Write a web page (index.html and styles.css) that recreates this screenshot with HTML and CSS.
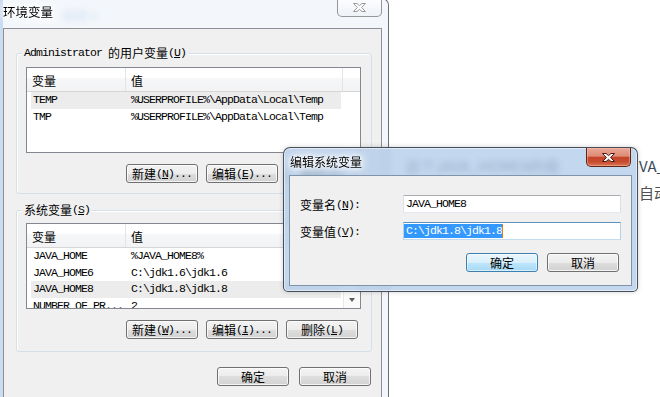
FILE: index.html
```html
<!DOCTYPE html>
<html lang="zh-CN">
<head>
<meta charset="utf-8">
<title>环境变量</title>
<link rel="stylesheet" href="styles.css">
</head>
<body>
<main class="desktop">
  <span class="bg-text bg-menu">编辑 ▾</span>
  <span class="bg-text bg-line1">这个JAVA_HOME8的值</span>
  <span class="bg-text bg-line2">VA_HOME</span>
  <span class="bg-text bg-line3">自动</span>

  <section class="win back">
    <header class="titlebar">
      <h1 class="title">环境变量</h1>
      <button class="close inactive" aria-label="关闭">
        <svg width="15" height="11" viewBox="0 0 15 11"><path d="M1.5 1.5H5L7.5 3.6L10 1.5H13.5L9.6 5.5L13.5 9.5H10L7.5 7.4L5 9.5H1.5L5.4 5.5Z"/></svg>
      </button>
    </header>
    <div class="client">
      <div class="group g1">
        <div class="legend"><span class="m">Administrator&nbsp;</span><span>的用户变量</span><span class="m">(<u>U</u>)</span></div>
        <div class="list">
          <div class="lv-main">
            <div class="lv-head"><div class="h c1">变量</div><div class="h c2">值</div><div class="h c3"></div></div>
            <div class="lv-body m">
              <div class="row sel"><span>TEMP</span><span>%USERPROFILE%\AppData\Local\Temp</span></div>
              <div class="row"><span>TMP</span><span>%USERPROFILE%\AppData\Local\Temp</span></div>
            </div>
          </div>
        </div>
        <div class="btnrow">
          <button class="btn">新建<span class="m">(<u>N</u>)...</span></button>
          <button class="btn">编辑<span class="m">(<u>E</u>)...</span></button>
          <button class="btn">删除<span class="m">(<u>D</u>)</span></button>
        </div>
      </div>

      <div class="group g2">
        <div class="legend"><span>系统变量</span><span class="m">(<u>S</u>)</span></div>
        <div class="list scroll">
          <div class="lv-main">
            <div class="lv-head"><div class="h c1">变量</div><div class="h c2">值</div></div>
            <div class="lv-body m">
              <div class="row"><span>JAVA_HOME</span><span>%JAVA_HOME8%</span></div>
              <div class="row"><span>JAVA_HOME6</span><span>C:\jdk1.6\jdk1.6</span></div>
              <div class="row sel"><span>JAVA_HOME8</span><span>C:\jdk1.8\jdk1.8</span></div>
              <div class="row"><span>NUMBER_OF_PR...</span><span>2</span></div>
            </div>
          </div>
          <div class="vscroll">
            <div class="sb-btn up"></div>
            <div class="sb-track"></div>
            <div class="sb-btn down"></div>
          </div>
        </div>
        <div class="btnrow">
          <button class="btn">新建<span class="m">(<u>W</u>)...</span></button>
          <button class="btn">编辑<span class="m">(<u>I</u>)...</span></button>
          <button class="btn">删除<span class="m">(<u>L</u>)</span></button>
        </div>
      </div>

      <div class="footer">
        <button class="btn">确定</button>
        <button class="btn">取消</button>
      </div>
    </div>
  </section>

  <section class="win front">
    <header class="titlebar">
      <h2 class="title">编辑系统变量</h2>
      <button class="close active" aria-label="关闭">
        <svg width="15" height="11" viewBox="0 0 15 11"><path d="M1.5 1.5H5L7.5 3.6L10 1.5H13.5L9.6 5.5L13.5 9.5H10L7.5 7.4L5 9.5H1.5L5.4 5.5Z"/></svg>
      </button>
    </header>
    <div class="client2">
      <div class="form">
        <label class="lbl"><span>变量名</span><span class="m">(<u>N</u>):</span></label>
        <div class="field"><span class="m">JAVA_HOME8</span></div>
        <label class="lbl"><span>变量值</span><span class="m">(<u>V</u>):</span></label>
        <div class="field focus"><span class="m selected">C:\jdk1.8\jdk1.8</span><span class="caret"></span></div>
        <div class="form-btns">
          <button class="btn default">确定</button>
          <button class="btn">取消</button>
        </div>
      </div>
    </div>
  </section>
</main>
</body>
</html>
```

FILE: styles.css
```css
* { box-sizing: border-box; }
html, body { margin: 0; padding: 0; }
body {
  width: 660px;
  height: 397px;
  overflow: hidden;
  background: #fff;
  font-family: "Noto Sans CJK SC", "Noto Sans", sans-serif;
  font-size: 12px;
  color: #000;
}
.desktop { position: relative; display: block; width: 660px; height: 397px; overflow: hidden; }

.m {
  font-family: "Liberation Mono", "DejaVu Sans Mono", monospace;
  font-size: 11.5px;
  letter-spacing: -0.9px;
}
u { text-decoration: underline; text-underline-offset: 1px; }

/* desktop text behind the glass */
.bg-text { position: absolute; font-size: 15px; line-height: 18px; color: #3b4756; white-space: nowrap; }
.bg-menu { left: 62px; top: 6px; font-size: 13px; color: #2d6fcf; }
.bg-line1 { left: 405px; top: 157px; }
.bg-line2 { left: 639px; top: 157px; color: #3a4a5e; }
.bg-line3 { left: 639px; top: 184px; color: #505050; }

/* windows */
.win { position: absolute; display: flex; flex-direction: column; }
.titlebar { display: flex; justify-content: space-between; align-items: flex-start; flex: none; }
.title {
  margin: 0;
  font-weight: normal;
  font-size: 12px;
  line-height: 16px;
  white-space: nowrap;
  text-shadow: 0 0 4px #fff, 0 0 7px #fff, 0 0 10px #fff, 0 0 12px #fff;
}

.close {
  width: 45px;
  padding: 0;
  margin: 0 6px 0 0;
  border-radius: 0 0 5px 5px;
  display: flex;
  align-items: center;
  justify-content: center;
}
.close.inactive {
  height: 18px;
  border: 1px solid rgba(70, 70, 70, 0.55);
  border-top: none;
  background: linear-gradient(rgba(255,255,255,0.7), rgba(236,240,245,0.7));
}
.close.inactive svg path { fill: #fdfdfd; stroke: #9a9a9a; stroke-width: 1; }
.close.active {
  height: 19px;
  border: 1px solid #5e2418;
  border-top: none;
  background: linear-gradient(#e9a898 0%, #de8b75 45%, #c5452a 52%, #c54a2e 75%, #da7453 100%);
  box-shadow: inset 0 0 0 1px rgba(255, 200, 180, 0.45);
}
.close.active svg path { fill: #fff; stroke: #4a1a12; stroke-width: 1; }

/* back window */
.back {
  left: 0;
  top: -2px;
  width: 389px;
  height: 430px;
  padding-left: 3px;
  border-top: 1px solid #6e6e6e;
  border-right: 1px solid #6e6e6e;
  border-top-right-radius: 7px;
  background: linear-gradient(90deg, rgba(196, 216, 238, 0.9) 0, rgba(196, 216, 238, 0.9) 3px, rgba(241, 245, 250, 0.86) 3px);
  backdrop-filter: blur(3px);
}
.back .titlebar { height: 29px; }
.back .title { padding-top: 5px; font-size: 12.5px; }

.client {
  flex: 1;
  width: 379px;
  border: 1px solid #8d9096;
  background: #f0f0f0;
  display: flex;
  flex-direction: column;
  align-items: flex-start;
}

.group {
  width: 356px;
  margin-left: 12px;
  border: 1px solid #d5dfe5;
  border-radius: 3px;
  box-shadow: inset 1px 1px 0 #fff;
  display: flex;
  flex-direction: column;
}
.g1 { margin-top: 24px; padding-bottom: 10px; }
.g2 { margin-top: 16px; padding-bottom: 12px; }
.legend {
  align-self: flex-start;
  display: flex;
  align-items: center;
  height: 14px;
  margin: -8px 0 0 5px;
  padding: 0 2px;
  line-height: 14px;
  background: #f0f0f0;
  white-space: nowrap;
}

.list {
  width: 335px;
  height: 86px;
  margin-left: 9px;
  border: 1px solid #828790;
  background: #fff;
  display: flex;
  overflow: hidden;
}
.g1 .list { margin-top: 7px; }
.g2 .list { margin-top: 6px; }
.lv-main { flex: 1; min-width: 0; overflow: hidden; }
.lv-head {
  display: flex;
  height: 24px;
  border-bottom: 1px solid #d5d5d5;
  background: linear-gradient(#ffffff 0%, #ffffff 42%, #f6f7f8 42%, #f2f3f5 100%);
}
.h { line-height: 16px; padding: 5px 0 0 5px; border-right: 1px solid #e3e4e6; white-space: nowrap; }
.h.c1 { width: 99px; }
.h.c2 { width: 217px; }
.h.c3 { flex: 1; border-right: none; }
.scroll .h.c2 { flex: 1; width: auto; border-right: none; }

.row {
  display: grid;
  grid-template-columns: 100px 1fr;
  width: 310px;
  height: 16.5px;
  margin-left: 4px;
  line-height: 16.5px;
  white-space: nowrap;
  overflow: hidden;
}
.row > span:first-child { padding-left: 2px; overflow: hidden; }
.row.sel { background: #ececec; }

.vscroll {
  width: 17px;
  flex: none;
  border-left: 1px solid #e8e8e8;
  background: #fafafa;
  display: flex;
  flex-direction: column;
}
.sb-track { flex: 1; }
.sb-btn { height: 17px; display: flex; align-items: center; justify-content: center; }
.sb-btn.down::before {
  content: "";
  border-left: 3.5px solid transparent;
  border-right: 3.5px solid transparent;
  border-top: 4px solid #5a5a5a;
}
.sb-btn.up::before {
  content: "";
  border-left: 3.5px solid transparent;
  border-right: 3.5px solid transparent;
  border-bottom: 4px solid #5a5a5a;
}

.btnrow { display: flex; justify-content: flex-end; gap: 8px; margin-right: 13px; }
.g1 .btnrow { margin-top: 11px; }
.g2 .btnrow { margin-top: 11px; }
.footer { align-self: flex-end; display: flex; gap: 10px; margin: 15px 10px 0 0; }

.btn {
  width: 72px;
  height: 19px;
  padding: 0;
  border: 1px solid #707070;
  border-radius: 3px;
  background: linear-gradient(#f3f3f3 0%, #ececec 50%, #dedede 50%, #d2d2d2 100%);
  box-shadow: inset 0 0 0 1px rgba(255, 255, 255, 0.75);
  font-family: "Noto Sans CJK SC", "Noto Sans", sans-serif;
  font-size: 12px;
  line-height: 15px;
  color: #000;
  display: flex;
  align-items: center;
  justify-content: center;
  white-space: nowrap;
}
.btn.default {
  border-color: #3c7fb1;
  background: linear-gradient(#eaf6fd 0%, #d9f0fc 50%, #bee6fd 50%, #a7d9f5 100%);
  box-shadow: inset 0 0 0 1px rgba(255, 255, 255, 0.55);
}

/* front dialog */
.front {
  left: 283px;
  top: 147px;
  width: 355px;
  height: 145px;
  border: 1px solid rgba(35, 40, 48, 0.78);
  border-radius: 7px 7px 5px 5px;
  background: rgba(178, 204, 233, 0.78);
  backdrop-filter: blur(3px);
  box-shadow: inset 0 0 0 1px rgba(255, 255, 255, 0.5), 0 0 5px rgba(0, 0, 0, 0.18);
}
.front .titlebar { height: 27px; padding-left: 6px; }
.front .title { padding-top: 6px; }

.client2 {
  width: 343px;
  height: 111px;
  margin-left: 5px;
  border: 1px solid #8193a8;
  background: #f0f0f0;
}
.form {
  display: grid;
  grid-template-columns: 103px 218px;
  row-gap: 9px;
  align-items: center;
  padding: 19px 0 0 10px;
}
.lbl { display: flex; align-items: center; height: 16px; white-space: nowrap; }
.field {
  height: 18px;
  border: 1px solid;
  border-color: #abadb3 #dbdfe6 #e3e9ef #e2e3ea;
  background: #fff;
  padding: 0 0 0 2px;
  line-height: 16px;
  white-space: nowrap;
  display: flex;
  align-items: center;
}
.field.focus { border-color: #5b93be #b5d2e8 #c4dcee #b5d2e8; padding-left: 0; }
.selected {
  background: #3399ff;
  color: #fff;
  padding-left: 2px;
  height: 14px;
  line-height: 14px;
}
.caret { width: 1px; height: 14px; background: #e8781a; }
.form-btns {
  grid-column: 1 / -1;
  display: flex;
  justify-content: flex-end;
  gap: 9px;
  margin: 4px 2px 0 0;
}
```
